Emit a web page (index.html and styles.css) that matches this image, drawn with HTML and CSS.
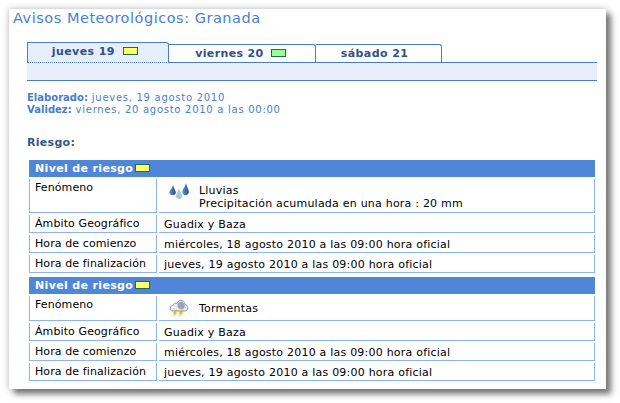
FILE: index.html
```html
<!DOCTYPE html>
<html lang="es">
<head>
<meta charset="utf-8">
<title>Avisos Meteorológicos: Granada</title>
<link rel="stylesheet" href="styles.css">
</head>
<body>
<main class="card">
  <h1 class="title">Avisos Meteorológicos: Granada</h1>
  <div class="tabs-wrap">
    <nav class="tabs">
      <div class="tab tab-active tab-1">jueves 19 <span class="swatch swatch-yellow"></span></div>
      <div class="tab tab-2">viernes 20 <span class="swatch swatch-green"></span></div>
      <div class="tab tab-3">sábado 21</div>
    </nav>
    <div class="band"></div>
  </div>
  <div class="meta">
    <div><b>Elaborado:</b> jueves, 19 agosto 2010</div>
    <div><b>Validez:</b> viernes, 20 agosto 2010 a las 00:00</div>
  </div>
  <h2 class="risk-title">Riesgo:</h2>

  <section class="risk">
    <div class="risk-head">Nivel de riesgo <span class="swatch swatch-yellow"></span></div>
    <div class="cell label tall-1">Fenómeno</div>
    <div class="cell value value-icon">
      <svg class="icon" width="24" height="24" viewBox="0 0 24 24" aria-hidden="true">
        <defs>
          <linearGradient id="d1" x1="0" y1="0" x2="1" y2="0"><stop offset="0" stop-color="#6d97c9"/><stop offset="1" stop-color="#1b4d94"/></linearGradient>
        </defs>
        <path d="M7 4C6.200 7.500 3.300 9.500 3.300 11.500C3.300 13.200 4.800 14.300 6.500 14.300C8.300 14.300 9.800 13.200 9.800 11.500C9.800 9.500 7.800 7.500 7 4Z" fill="url(#d1)"/>
        <path d="M20 2C19.200 6 16.300 8.500 16.300 11C16.300 12.800 17.800 14.300 19.500 14.300C21.300 14.300 22.800 12.800 22.800 11C22.800 8.500 20.800 6 20 2Z" fill="url(#d1)"/>
        <path d="M13 7C12.200 10.500 10 12.500 10 15C10 16.800 11.300 18 13 18C14.700 18 16 16.800 16 15C16 12.500 13.800 10.500 13 7Z" fill="#a6c8df"/>
      </svg>
      <div class="value-text">Lluvias<br>Precipitación acumulada en una hora : 20 mm</div>
    </div>
    <div class="cell label">Ámbito Geográfico</div>
    <div class="cell value">Guadix y Baza</div>
    <div class="cell label">Hora de comienzo</div>
    <div class="cell value">miércoles, 18 agosto 2010 a las 09:00 hora oficial</div>
    <div class="cell label">Hora de finalización</div>
    <div class="cell value">jueves, 19 agosto 2010 a las 09:00 hora oficial</div>
  </section>

  <section class="risk">
    <div class="risk-head">Nivel de riesgo <span class="swatch swatch-yellow"></span></div>
    <div class="cell label tall-2">Fenómeno</div>
    <div class="cell value value-icon value-icon-2">
      <svg class="icon" width="24" height="24" viewBox="0 0 24 24" aria-hidden="true">
        <path d="M7 15C4.500 15 4 13.500 4.300 12C4.500 10.500 5.500 9.500 7 9.700C7.500 7.500 9.500 6.500 11 7.500C12 4.800 14.500 4 16.500 4.800C18.500 5.500 19 7.300 19 8.500C21 8.800 22 10.300 21.800 12C21.500 14 20.300 15 18.500 15Z" fill="#dfe8f5" stroke="#7f97bd" stroke-width="1"/>
        <path d="M12 7.500C13.500 5.600 16.500 5.700 18 7.500C19.500 9.500 19 12 17 13C15 13.800 12.500 13 11.800 11C11.400 9.800 11.500 8.500 12 7.500Z" fill="#98a5b8"/>
        <path d="M5.500 12C6.500 10.800 8.500 10.800 9.500 12" fill="none" stroke="#fff" stroke-width="1.500"/>
        <path d="M9.500 14L6.500 17.500L8.800 17.500L6 21.500L11.500 16.500L9.300 16.500L12 14Z" fill="#f5a81c"/>
        <path d="M15.500 14L12.500 17.500L14.800 17.500L12 21.500L17.500 16.500L15.300 16.500L18 14Z" fill="#f5a81c"/>
      </svg>
      <div class="value-text">Tormentas</div>
    </div>
    <div class="cell label">Ámbito Geográfico</div>
    <div class="cell value">Guadix y Baza</div>
    <div class="cell label">Hora de comienzo</div>
    <div class="cell value">miércoles, 18 agosto 2010 a las 09:00 hora oficial</div>
    <div class="cell label">Hora de finalización</div>
    <div class="cell value">jueves, 19 agosto 2010 a las 09:00 hora oficial</div>
  </section>
</main>
</body>
</html>
```

FILE: styles.css
```css
* { box-sizing: border-box; }
html, body { margin: 0; padding: 0; background: #fff; }
body {
  width: 620px;
  height: 403px;
  overflow: hidden;
  padding: 9px 14px 0 9px;
  font-family: "DejaVu Sans", Verdana, sans-serif;
  font-size: 11px;
  color: #000;
}
.card {
  width: 597px;
  height: 380px;
  background: #fff;
  box-shadow: 5px 5px 6px #777, 0 0 7px #bbb;
  padding: 0 9px 0 18px;
}
.title {
  margin: 0 0 0 -14px;
  padding-top: 1px;
  height: 32px;
  font-size: 14.5px;
  line-height: 16px;
  font-weight: normal;
  color: #4a80d4;
  letter-spacing: .52px;
}
.tabs { display: flex; align-items: flex-end; height: 21px; }
.tab {
  height: 18px;
  border: 1px solid #4a7cc4;
  border-bottom: 0;
  border-left: 0;
  border-radius: 0 3px 0 0;
  background: #fff;
  color: #2f5288;
  font-weight: bold;
  font-size: 11px;
  line-height: 17px;
  letter-spacing: .42px;
  text-align: center;
}
.tab-1 { width: 142px; }
.tab-2 { width: 147px; padding-right: 3px; letter-spacing: .36px; }
.tab-3 { width: 126px; padding-right: 8px; }
.tab-active {
  height: 21px;
  background: #e6eefa;
  border-left: 1px solid #4a7cc4;
  border-bottom: 1px dotted #4a7cc4;
  line-height: 18px;
  position: relative;
  z-index: 1;
  margin-bottom: -1px;
  padding-right: 6px;
}
.band {
  height: 19px;
  background: #e8eff9;
  border-top: 1px solid #4a7cc4;
  border-bottom: 1px solid #4a7cc4;
}
.swatch {
  display: inline-block;
  width: 15px;
  height: 8px;
  margin-left: 3px;
  border: 1px solid #1f6a50;
}
.tab-active .swatch { margin-left: 4px; }
.swatch-yellow { background: #ffff66; }
.swatch-green { background: #99ff99; }
.meta {
  margin-top: 11px;
  color: #4a80d4;
  font-size: 10px;
  line-height: 12px;
  letter-spacing: .72px;
}
.meta b { font-weight: bold; color: #4a7cc8; letter-spacing: .02px; }
.risk-title {
  margin: 20px 0 0;
  height: 24px;
  line-height: 14px;
  font-size: 11px;
  font-weight: bold;
  color: #34558c;
  letter-spacing: .3px;
}
.risk {
  margin: 0 0 4px 2px;
  display: grid;
  grid-template-columns: 128px 436px;
  column-gap: 2px;
  row-gap: 2px;
  grid-auto-rows: 18px;
  grid-template-rows: 17px auto;
}
.risk-head {
  grid-column: 1 / -1;
  background: #4f86d8;
  color: #fff;
  font-weight: bold;
  font-size: 11px;
  line-height: 17px;
  padding-left: 6px;
  letter-spacing: .35px;
}
.risk-head .swatch { margin-left: -2px; }
.cell {
  border-bottom: 1px solid #8fb5ee;
  line-height: 16px;
  font-size: 11px;
  letter-spacing: .22px;
  white-space: nowrap;
}
.label {
  border-left: 1px solid #8fb5ee;
  border-right: 1px solid #8fb5ee;
  padding: 1px 0 0 5px;
  letter-spacing: .1px;
}
.value {
  border-right: 1px solid #8fb5ee;
  padding: 2px 0 0 5px;
}
.tall-1, .tall-1 + .value { height: 34px; }
.tall-2, .tall-2 + .value { height: 25px; }
.value-icon {
  display: flex;
  align-items: flex-start;
  gap: 9px;
  line-height: 13px;
  padding: 2px 0 0 7px;
}
.value-icon-2 { padding-top: 0; }
.value-text { margin-top: 3px; }
.value-icon-2 .value-text { margin-top: 6px; }
.icon { flex: none; }
```
